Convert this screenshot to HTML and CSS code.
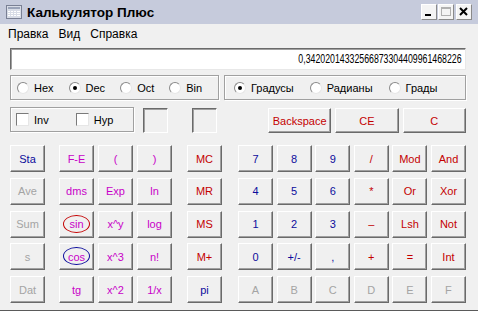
FILE: index.html
```html
<html>
<head>
<title>Калькулятор Плюс</title>
<link rel="stylesheet" href="styles.css">
</head>
<body>
<div class="window">
	<div class="titlebar">
		<svg class="app-icon" width="16" height="16" viewBox="0 0 16 16">
			<rect x="0.5" y="1.5" width="15" height="13" fill="#d8dce6" stroke="#7a8094"/>
			<rect x="2" y="3" width="12" height="2" fill="#9aa3b8"/>
			<g fill="#ffffff">
				<rect x="2" y="7" width="2" height="1"/><rect x="5" y="7" width="2" height="1"/><rect x="8" y="7" width="2" height="1"/><rect x="11" y="7" width="3" height="1"/>
				<rect x="2" y="9" width="2" height="1"/><rect x="5" y="9" width="2" height="1"/><rect x="8" y="9" width="2" height="1"/><rect x="11" y="9" width="3" height="1"/>
				<rect x="2" y="11" width="2" height="1"/><rect x="5" y="11" width="2" height="1"/><rect x="8" y="11" width="2" height="1"/><rect x="11" y="11" width="3" height="1"/>
			</g>
		</svg>
		<span class="title">Калькулятор Плюс</span>
		<div class="tb-buttons">
			<div class="tb-btn"><svg width="14" height="14" viewBox="0 0 14 14"><rect x="3" y="9" width="6" height="2" fill="#000"/></svg></div>
			<div class="tb-btn"><svg width="14" height="14" viewBox="0 0 14 14"><rect x="2.5" y="2.5" width="9" height="8" fill="none" stroke="#b0b0b0"/><rect x="2" y="2" width="10" height="2" fill="#b0b0b0"/></svg></div>
			<div class="tb-btn close"><svg width="14" height="14" viewBox="0 0 14 14"><path d="M3 3 L10 10 M10 3 L3 10" stroke="#000" stroke-width="2"/></svg></div>
		</div>
	</div>
	<div class="menubar">
		<span>Правка</span>
		<span>Вид</span>
		<span>Справка</span>
	</div>
	<div class="content">
		<div class="display"><span class="digits">0,34202014332566873304409961468226</span></div>

		<div class="modes">
			<div class="group radix">
				<label class="opt"><i class="radio"></i>Hex</label>
				<label class="opt"><i class="radio on"></i>Dec</label>
				<label class="opt"><i class="radio"></i>Oct</label>
				<label class="opt"><i class="radio"></i>Bin</label>
			</div>
			<div class="group angle">
				<label class="opt"><i class="radio on"></i>Градусы</label>
				<label class="opt"><i class="radio"></i>Радианы</label>
				<label class="opt"><i class="radio"></i>Грады</label>
			</div>
		</div>

		<div class="ops">
			<div class="group invhyp">
				<label class="opt"><i class="check"></i>Inv</label>
				<label class="opt"><i class="check"></i>Hyp</label>
			</div>
			<div class="sunken first"></div>
			<div class="sunken"></div>
			<div class="clear-keys">
				<div class="btn red">Backspace</div>
				<div class="btn red">CE</div>
				<div class="btn red">C</div>
			</div>
		</div>

		<div class="keys">
			<div class="kgroup stat">
				<div class="btn blue">Sta</div>
				<div class="btn grey">Ave</div>
				<div class="btn grey">Sum</div>
				<div class="btn grey">s</div>
				<div class="btn grey">Dat</div>
			</div>
			<div class="kgroup sci">
				<div class="btn mag">F-E</div><div class="btn mag">(</div><div class="btn mag">)</div>
				<div class="btn mag">dms</div><div class="btn mag">Exp</div><div class="btn mag">ln</div>
				<div class="btn mag">sin<span class="ring red-ring"></span></div><div class="btn mag">x^y</div><div class="btn mag">log</div>
				<div class="btn mag">cos<span class="ring blue-ring"></span></div><div class="btn mag">x^3</div><div class="btn mag">n!</div>
				<div class="btn mag">tg</div><div class="btn mag">x^2</div><div class="btn mag">1/x</div>
			</div>
			<div class="kgroup mem">
				<div class="btn red">MC</div>
				<div class="btn red">MR</div>
				<div class="btn red">MS</div>
				<div class="btn red">M+</div>
				<div class="btn blue">pi</div>
			</div>
			<div class="kgroup num">
				<div class="btn blue">7</div><div class="btn blue">8</div><div class="btn blue">9</div><div class="btn red">/</div><div class="btn red">Mod</div><div class="btn red">And</div>
				<div class="btn blue">4</div><div class="btn blue">5</div><div class="btn blue">6</div><div class="btn red">*</div><div class="btn red">Or</div><div class="btn red">Xor</div>
				<div class="btn blue">1</div><div class="btn blue">2</div><div class="btn blue">3</div><div class="btn red">&ndash;</div><div class="btn red">Lsh</div><div class="btn red">Not</div>
				<div class="btn blue">0</div><div class="btn blue">+/-</div><div class="btn blue">,</div><div class="btn red">+</div><div class="btn red">=</div><div class="btn red">Int</div>
				<div class="btn grey">A</div><div class="btn grey">B</div><div class="btn grey">C</div><div class="btn grey">D</div><div class="btn grey">E</div><div class="btn grey">F</div>
			</div>
		</div>
	</div>
</div>
</body>
</html>
```

FILE: styles.css
```css
body {
	margin: 0;
	background-color: #ffffff;
	font-family: "Liberation Sans", Arial, sans-serif;
	font-size: 11px;
}
.window {
	width: 478px;
	height: 311px;
	background-color: #f0f0f0;
	border-bottom: 1px solid #5a5a5a;
	box-sizing: border-box;
}
.titlebar {
	height: 24px;
	background-color: #c6cbdc;
	display: flex;
	align-items: center;
	padding-left: 6px;
}
.app-icon {
	margin-right: 5px;
}
.title {
	font-weight: bold;
	font-size: 13.5px;
	color: #000;
}
.tb-buttons {
	margin-left: auto;
	margin-right: 6px;
	display: flex;
	gap: 1px;
}
.tb-btn {
	width: 14px;
	height: 14px;
	background-color: #f4f4f4;
	border: 1px solid;
	border-color: #ffffff #8a8a8a #8a8a8a #ffffff;
}
.tb-btn.close {
	margin-left: 1px;
}
.tb-btn svg {
	display: block;
}
.menubar {
	height: 20px;
	display: flex;
	align-items: center;
	padding-left: 8px;
	gap: 10px;
	font-size: 12px;
}
.content {
	padding: 4px 12px 0 10px;
}
.display {
	height: 22px;
	background-color: #ffffff;
	border: 1px solid;
	border-color: #6a6a6a #e8e8e8 #e8e8e8 #6a6a6a;
	box-shadow: inset 1px 1px #a0a0a0;
	box-sizing: border-box;
	display: flex;
	align-items: center;
	justify-content: flex-end;
	padding-right: 3px;
	overflow: hidden;
}
.digits {
	display: inline-block;
	font-size: 12px;
	transform: scaleX(0.73);
	transform-origin: right center;
	white-space: nowrap;
}

.modes {
	margin-top: 5px;
	display: flex;
	gap: 5px;
	height: 25px;
}
.group {
	border: 1px solid #a0a0a0;
	box-shadow: inset 1px 1px #ffffff, 1px 1px #ffffff;
	box-sizing: border-box;
	display: flex;
	align-items: center;
}
.radix {
	width: 209px;
	padding-left: 6px;
	gap: 15px;
}
.angle {
	flex: 1;
	padding-left: 9px;
	gap: 16px;
}
.opt {
	display: flex;
	align-items: center;
	gap: 5px;
}
.radio {
	width: 10px;
	height: 10px;
	border-radius: 50%;
	border: 1px solid;
	border-color: #8a8a8a #e6e6e6 #e6e6e6 #8a8a8a;
	background-color: #ffffff;
	position: relative;
}
.radio.on::after {
	content: "";
	position: absolute;
	left: 3px;
	top: 3px;
	width: 4px;
	height: 4px;
	border-radius: 50%;
	background-color: #000;
}
.check {
	width: 11px;
	height: 11px;
	border: 1px solid;
	border-color: #7a7a7a #e6e6e6 #e6e6e6 #7a7a7a;
	background-color: #ffffff;
}

.ops {
	margin-top: 7px;
	height: 26px;
	display: flex;
}
.invhyp {
	width: 124px;
	height: 25px;
	padding-left: 5px;
	gap: 27px;
}
.sunken {
	width: 25px;
	height: 25px;
	margin-top: 1px;
	margin-left: 24px;
	border: 1px solid;
	border-color: #6a6a6a #ffffff #ffffff #6a6a6a;
	box-shadow: inset 1px 1px #a0a0a0;
	box-sizing: border-box;
}
.sunken.first {
	margin-left: 9px;
}
.clear-keys {
	margin-left: auto;
	width: 198px;
	height: 25px;
	margin-top: 1px;
	display: grid;
	grid-template-columns: repeat(3, 1fr);
	column-gap: 4px;
}

.btn {
	position: relative;
	display: flex;
	align-items: center;
	justify-content: center;
	background-color: #f0f0f0;
	border: 1px solid;
	border-color: #ffffff #6a6a6a #6a6a6a #ffffff;
	box-shadow: inset -1px -1px #a0a0a0;
	box-sizing: border-box;
}
.blue { color: #0c0c9c; }
.red { color: #c40000; }
.mag { color: #c800c8; }
.grey { color: #a4a4a4; }

.keys {
	margin-top: 12px;
	display: flex;
}
.kgroup {
	display: grid;
	grid-template-rows: repeat(5, 27px);
	row-gap: 5.75px;
	column-gap: 4px;
}
.stat {
	grid-template-columns: 35px;
}
.sci {
	margin-left: 14px;
	grid-template-columns: repeat(3, 35px);
}
.mem {
	margin-left: 15px;
	grid-template-columns: 35px;
}
.num {
	margin-left: 16px;
	flex: 1;
	grid-template-columns: repeat(6, 1fr);
	column-gap: 3.6px;
}
.ring {
	position: absolute;
	left: 3px;
	top: 3px;
	width: 27px;
	height: 18px;
	border-radius: 50%;
	border: 1px solid;
	box-sizing: border-box;
}
.red-ring { border-color: #c40000; }
.blue-ring { border-color: #0c0c9c; }
```
